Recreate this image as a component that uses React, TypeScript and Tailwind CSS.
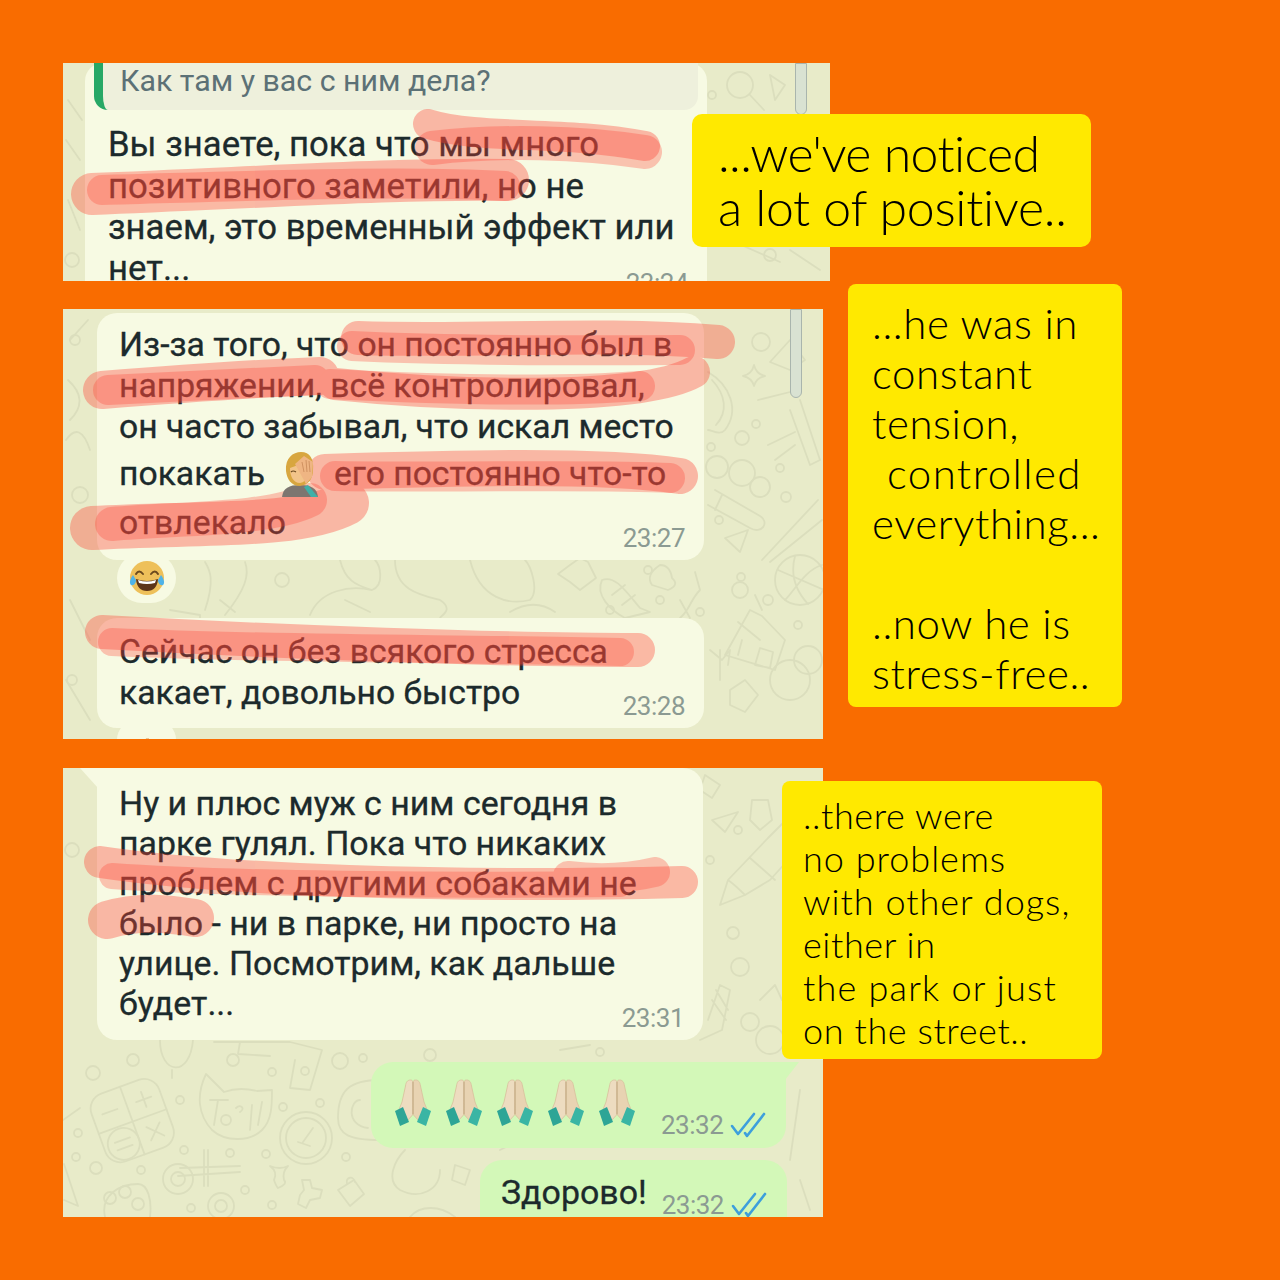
import React from "react";

function Doodles({ box, dots, children }: { box: string; dots: number[][]; children: React.ReactNode }) {
  return (
    <svg className="absolute inset-0 w-full h-full" viewBox={box} fill="none" stroke="#dbdebd" strokeWidth="1.8" strokeLinecap="round" strokeLinejoin="round">
      {dots.map((d, i) => (
        <circle key={i} cx={d[0]} cy={d[1]} r={d[2]} />
      ))}
      {children}
    </svg>
  );
}

function Strokes({ box, light, core }: { box: string; light: [string, number][]; core: [string, number][] }) {
  return (
    <svg className="absolute inset-0 w-full h-full z-10" viewBox={box} fill="none" stroke="#ff4436" strokeLinecap="round" strokeLinejoin="round">
      <g opacity="0.36">
        {light.map((s, i) => (
          <path key={i} d={s[0]} strokeWidth={s[1]} />
        ))}
      </g>
      <g opacity="0.3">
        {core.map((s, i) => (
          <path key={i} d={s[0]} strokeWidth={s[1]} />
        ))}
      </g>
    </svg>
  );
}

function Ticks() {
  return (
    <svg width="36" height="26" viewBox="0 0 36 26" fill="none" stroke="#3d9fdc" strokeWidth="2.6" strokeLinecap="round" strokeLinejoin="round">
      <path d="M2 14 L8 22 L24 2" />
      <path d="M15 21 L17 24 L34 2" />
    </svg>
  );
}

function Hands() {
  return (
    <svg width="36" height="48" viewBox="0 0 36 48">
      <path d="M15.5 1 C12.5 1 11 3 10.5 7 L7 23 L3 33 L12 42 L17.5 36 L17.7 3 C17.5 1.5 17 1 15.5 1Z" fill="#eddcc0" stroke="#d8bf9c" strokeWidth="0.8" />
      <path d="M20.5 1 C23.5 1 25 3 25.5 7 L29 23 L33 33 L24 42 L18.5 36 L18.3 3 C18.5 1.5 19 1 20.5 1Z" fill="#e8d3b2" stroke="#d8bf9c" strokeWidth="0.8" />
      <path d="M18 3 L18 35" stroke="#c6a986" strokeWidth="1" />
      <path d="M0 32 L8 28 L14 43 L5 47Z" fill="#2ea596" />
      <path d="M36 32 L28 28 L22 43 L31 47Z" fill="#3ab5a4" />
    </svg>
  );
}

function Joy() {
  return (
    <svg width="38" height="38" viewBox="0 0 38 38">
      <circle cx="19" cy="19" r="17" fill="#eec05a" />
      <path d="M8 15 Q11 10 15 15 M23 15 Q27 10 30 15" fill="none" stroke="#6b4a1e" strokeWidth="2" strokeLinecap="round" />
      <path d="M8 20 Q19 24 30 20 Q29 32 19 32 Q9 32 8 20Z" fill="#5d3518" />
      <path d="M10 21 Q19 24 28 21 L27 24 Q19 26 11 24Z" fill="#fff" />
      <path d="M5 16 C2 20 1 24 3 26 C6 27 8 24 8 21Z" fill="#4fb3e8" />
      <path d="M33 16 C36 20 37 24 35 26 C32 27 30 24 30 21Z" fill="#4fb3e8" />
    </svg>
  );
}

function Facepalm() {
  return (
    <svg width="38" height="46" viewBox="0 0 38 46" className="relative z-20">
      <path d="M1 46 C2 37 8 34 19 34 C30 34 36 37 37 46Z" fill="#7d7670" />
      <path d="M27 34 L37 46 L30 46 L23 36Z" fill="#3fb0a8" />
      <path d="M5 20 C4 7 12 1 20 1 C29 1 33 8 32 19 C32 27 28 34 19 35 C10 35 6 28 5 20Z" fill="#d8a63f" />
      <path d="M9 17 C14 15 22 12 27 12 C29 20 27 31 19 32 C12 32 9 25 9 17Z" fill="#f2c48a" />
      <path d="M14 13 L23 5 L32 11 L31 26 L25 33 L19 22Z" fill="#efb583" />
      <path d="M21 11 L23 21 M25 9 L26 21 M28 10 L29 21" stroke="#d09261" strokeWidth="1" />
      <path d="M10 21 Q12 19 15 21" stroke="#6b4a1e" strokeWidth="1.2" fill="none" />
    </svg>
  );
}

function Time({ children, className }: { children: React.ReactNode; className: string }) {
  return <span className={"font-['Roboto',sans-serif] text-[26px] leading-[30px] text-[#8b9a92] tracking-[-0.5px] whitespace-nowrap [-webkit-text-stroke:0px] " + className}>{children}</span>;
}

export default function App() {
  const chat = "font-['Roboto',sans-serif] text-[#1c2a2c] whitespace-nowrap [-webkit-text-stroke:0.3px_#1c2a2c]";
  const card = "font-['Lato',sans-serif] font-light text-black whitespace-nowrap";
  return (
    <div className="w-[1280px] h-[1280px] bg-[#f96c00] overflow-hidden pt-[63px] pl-[63px] flex flex-col">
      {/* Row 1 */}
      <div className="flex items-start">
        <div className="relative w-[767px] h-[218px] bg-[#e8ebc9] overflow-hidden shrink-0">
          <Doodles box="63 63 767 218" dots={[[815, 130, 5], [72, 260, 7], [712, 95, 4], [770, 255, 6]]}>
            <circle cx="740" cy="85" r="13" />
            <path d="M750 95 L764 110 M720 130 L760 118 L790 140 L750 165Z M712 190 L745 210 L780 190 M730 240 L780 262 M800 200 L825 180 M790 250 L820 270 M770 75 L785 85 L775 100Z" />
            <path d="M68 100 L82 120 M66 140 L80 160 M68 200 L80 230" />
          </Doodles>
          <div className="relative ml-[22px] w-[622px] h-[300px] bg-[#f7fae3] rounded-[18px] px-[9px]">
            <div className="h-[47px] bg-[#eef0dc] rounded-b-[14px] border-l-[9px] border-[#27a866] pl-[17px] text-[#5c7176] font-['Roboto',sans-serif] text-[30.3px] leading-[36px] whitespace-nowrap">
              Как там у вас с ним дела?
            </div>
            <div className={"mt-[14px] pl-[14px] text-[34.7px] " + chat}>
              <div className="h-[41.5px] leading-[41.5px]">Вы знаете, пока что мы много</div>
              <div className="h-[41.5px] leading-[41.5px]">позитивного заметили, но не</div>
              <div className="h-[41px] leading-[41px]">знаем, это временный эффект или</div>
              <div className="flex justify-between h-[41px] leading-[41px] pr-[10px]">
                <span>нет...</span>
                <Time className="mt-[20px]">23:24</Time>
              </div>
            </div>
          </div>
          <div className="absolute top-0 left-[732px] w-[12px] h-[52px] border border-[#a9b5ad] bg-[#d9e2d2] rounded-b-full" />
          <Strokes
            box="63 63 767 218"
            light={[
              ["M428 124 C480 140 560 130 645 146", 30],
              ["M92 194 C250 188 400 178 508 180", 42],
            ]}
            core={[
              ["M432 148 C500 140 580 142 645 152", 34],
              ["M102 190 C250 186 400 180 505 186", 30],
            ]}
          />
        </div>
        <div className={"relative z-20 -ml-[138px] mt-[51px] w-[399px] h-[133px] shrink-0 bg-[#ffe900] rounded-[10px] pt-[12px] pl-[26px] text-[50px] leading-[54px] " + card}>
          <div className="tracking-[-0.6px]">...we've noticed</div>
          <div className="tracking-[-0.3px]">a lot of positive..</div>
        </div>
      </div>

      {/* Row 2 */}
      <div className="flex items-start mt-[28px]">
        <div className="relative w-[760px] h-[430px] bg-[#e8ebc9] overflow-hidden shrink-0">
          <Doodles box="63 309 760 430" dots={[[761, 342, 9], [717, 467, 11], [742, 473, 13], [760, 487, 10], [742, 438, 7], [756, 424, 4], [711, 447, 4], [780, 468, 4], [786, 497, 5], [719, 520, 4], [741, 577, 4], [798, 625, 4], [80, 495, 8], [282, 580, 7], [648, 570, 4], [660, 600, 4], [740, 590, 8], [768, 600, 5], [610, 610, 4], [700, 612, 4], [75, 340, 5], [72, 680, 5]]}>
            <path d="M754 365 Q756 374 765 376 Q756 378 754 386 Q752 378 743 376 Q752 374 754 365Z" />
            <path d="M708 372 C730 385 740 410 725 430 C720 436 712 430 708 430 M712 380 C726 395 728 412 716 425" />
            <path d="M770 362 L790 340 L805 360 L790 370Z M790 410 L810 465 L820 460 L800 400 M758 400 L790 392 M768 445 L795 432 M775 460 L795 445" />
            <path d="M715 490 L760 516 C770 522 762 535 750 528 L708 505 M722 495 L715 510" />
            <path d="M725 538 L748 530 L740 552Z" />
            <path d="M762 560 L818 500 M770 562 L822 520" />
            <circle cx="800" cy="580" r="25" />
            <path d="M778 570 L824 590 M795 556 C790 575 795 590 808 604 M822 565 C805 570 795 590 785 600" />
            <path d="M725 655 L750 610 L762 616 L785 640 L775 670 L725 655 M738 622 L760 640 M742 640 L738 655 M760 648 L755 665 L770 668 L773 652Z M755 595 L762 610" />
            <circle cx="790" cy="680" r="20" />
            <circle cx="808" cy="660" r="14" />
            <path d="M710 650 L722 660 L730 650 L728 665 M720 650 L720 680" />
            <path d="M730 690 L745 680 L758 695 L745 712 L730 705Z" />
            <path d="M68 380 Q90 400 70 420 M70 340 L88 320 M66 440 Q80 420 90 450 M70 600 L90 640 M66 680 L90 720" />
            <path d="M205 610 C215 580 210 570 205 562 M225 615 C245 590 250 575 245 562 M235 612 L220 600" />
            <path d="M310 615 C320 590 350 585 372 590 C385 585 380 565 375 560 M340 560 C345 580 355 585 372 590 M345 600 L370 612" />
            <path d="M395 560 C395 590 420 595 440 600 C455 610 440 616 440 618 M470 560 C480 600 510 605 530 600 C540 590 530 565 525 560 M510 612 C530 600 545 605 555 612" />
            <path d="M602 580 C615 575 625 590 640 608 L650 612 L625 618 C610 610 595 595 602 580Z M612 595 L625 585 M622 605 L635 595" />
            <path d="M170 610 L200 615 L200 618 M570 565 L580 558 L588 562 L596 578 L580 590 L570 582 L558 574Z" />
            <path d="M660 565 Q670 565 672 578 Q680 585 668 590 L652 585 Q645 575 660 565Z M680 600 L690 618 M695 572 L700 590 C690 600 690 610 680 618" />
          </Doodles>
          <div className="ml-[34px] mt-[4px] w-[607px] h-[247px] bg-[#f7fae3] rounded-[20px] pt-[11px] pl-[22px] pr-[19px] relative">
            <div className={"text-[33.7px] " + chat}>
              <div className="h-[41px] leading-[41px]">Из-за того, что он постоянно был в</div>
              <div className="h-[41px] leading-[41px]">напряжении, всё контролировал,</div>
              <div className="h-[41px] leading-[41px]">он часто забывал, что искал место</div>
              <div className="flex items-center h-[56px] -mt-px">
                <span>покакать</span>
                <span className="ml-[16px] mr-[15px]"><Facepalm /></span>
                <span>его постоянно что-то</span>
              </div>
              <div className="flex justify-between h-[41px] leading-[41px]">
                <span>отвлекало</span>
                <Time className="mt-[21px]">23:27</Time>
              </div>
            </div>
          </div>
          <div className="relative z-[5] ml-[54px] -mt-[7px] w-[59px] h-[50px] rounded-full bg-[#f7fae3] flex items-center justify-center">
            <Joy />
          </div>
          <div className="ml-[34px] mt-[15px] w-[607px] h-[110px] bg-[#f7fae3] rounded-[20px] pt-[13px] pl-[22px] pr-[19px] relative">
            <div className={"text-[33.7px] " + chat}>
              <div className="h-[41px] leading-[41px]">Сейчас он без всякого стресса</div>
              <div className="flex justify-between h-[41px] leading-[41px]">
                <span>какает, довольно быстро</span>
                <Time className="mt-[19px]">23:28</Time>
              </div>
            </div>
          </div>
          <div className="ml-[54px] -mt-[8px] w-[59px] h-[40px] rounded-full bg-[#f7fae3] relative">
            <svg className="absolute left-[24px] top-[18px]" width="12" height="14" viewBox="0 0 12 14"><path d="M5 0 L8 0 L8 14 L2 14Z" fill="#e8c79a" /></svg>
          </div>
          <div className="absolute top-0 left-[727px] w-[12px] h-[89px] border border-[#a9b5ad] bg-[#d9e2d2] rounded-b-full" />
          <Strokes
            box="63 309 760 430"
            light={[
              ["M358 338 C480 342 600 332 718 342", 34],
              ["M102 390 C200 382 270 378 320 376", 38],
              ["M335 384 C450 396 640 402 694 372", 32],
              ["M325 472 C460 468 600 464 680 476", 36],
              ["M347 503 C300 528 200 522 92 528", 44],
              ["M102 632 C280 642 500 650 638 650", 34],
            ]}
            core={[
              ["M352 346 C480 352 600 350 680 350", 30],
              ["M108 390 C200 386 270 382 315 380", 30],
              ["M330 384 C450 390 560 392 640 386", 30],
              ["M335 476 C460 478 600 474 670 478", 30],
              ["M310 500 C270 520 180 518 112 524", 34],
              ["M112 642 C300 650 450 648 620 652", 28],
            ]}
          />
        </div>
        <div className={"relative z-20 ml-[25px] -mt-[25px] w-[274px] h-[423px] shrink-0 bg-[#ffe900] rounded-[8px] pt-[14px] pl-[24px] text-[42px] leading-[50px] " + card}>
          <div className="tracking-[0.6px]">...he was in</div>
          <div className="tracking-[0.6px]">constant</div>
          <div className="tracking-[0.6px]">tension,</div>
          <div className="tracking-[1.4px] pl-[15px]">controlled</div>
          <div className="tracking-[0.6px]">everything...</div>
          <div className="h-[50px]" />
          <div className="tracking-[0.6px]">..now he is</div>
          <div className="tracking-[0.6px]">stress-free..</div>
        </div>
      </div>

      {/* Row 3 */}
      <div className="flex items-start mt-[29px]">
        <div className="relative w-[760px] h-[449px] bg-[#e8ebc9] overflow-hidden shrink-0">
          <Doodles box="63 768 760 449" dots={[[133, 1060, 6], [93, 1073, 7], [233, 1060, 6], [272, 1072, 4], [305, 1071, 4], [340, 1061, 8], [363, 1058, 4], [180, 1100, 4], [283, 1107, 4], [320, 1103, 4], [78, 1133, 4], [76, 1157, 4], [96, 1168, 6], [141, 1170, 4], [184, 1150, 4], [230, 1153, 4], [266, 1154, 4], [346, 1157, 4], [245, 1190, 4], [272, 1205, 4], [191, 1208, 4], [733, 933, 6], [740, 967, 9], [750, 1022, 9], [710, 860, 4], [738, 830, 4], [72, 850, 7], [770, 1040, 14], [600, 1052, 4], [430, 1055, 6]]}>
            <g transform="rotate(-20 131 1120)">
              <rect x="96" y="1085" width="72" height="72" rx="16" />
              <path d="M132 1085 L132 1157 M96 1122 L168 1122 M106 1105 L122 1105 M142 1105 L158 1105 M150 1097 L150 1113 M143 1132 L157 1146 M157 1132 L143 1146" />
              <circle cx="116" cy="1140" r="16" />
              <path d="M108 1136 L124 1136 M108 1144 L124 1144" />
            </g>
            <path d="M206 1074 L224 1092 C235 1088 245 1088 257 1091 L272 1090 C272 1105 272 1120 262 1130 C250 1142 225 1142 212 1130 C198 1115 196 1095 206 1074Z M210 1100 L228 1100 M218 1100 L214 1125 M236 1108 C240 1104 246 1108 240 1112 M252 1105 L250 1130 M262 1102 L258 1125" />
            <circle cx="226" cy="1120" r="5" />
            <circle cx="306" cy="1138" r="26" />
            <circle cx="306" cy="1138" r="20" />
            <path d="M303 1142 L313 1128 M298 1142 L310 1146" />
            <path d="M204 1150 L204 1186 M208 1150 L208 1186 M180 1168 L240 1166 M178 1176 L240 1172" />
            <circle cx="178" cy="1179" r="15" />
            <circle cx="178" cy="1179" r="7" />
            <circle cx="221" cy="1206" r="13" />
            <circle cx="221" cy="1206" r="6" />
            <path d="M274 1180 Q278 1172 270 1166 Q280 1170 288 1166 Q282 1172 284 1180 Q288 1184 278 1188 Q276 1186 274 1180Z" />
            <path d="M300 1195 L304 1190 L302 1180 L310 1180 L312 1188 L322 1190 L320 1198 L310 1200 L306 1208 L298 1204 L300 1195Z" />
            <path d="M338 1190 L354 1180 L364 1194 L350 1206 L338 1190Z M347 1184 C345 1176 354 1176 355 1182" />
            <path d="M105 1217 C100 1195 120 1184 138 1184 C148 1184 152 1200 150 1217" />
            <circle cx="110" cy="1198" r="6" />
            <circle cx="125" cy="1192" r="6" />
            <circle cx="138" cy="1204" r="6" />
            <path d="M63 1120 L80 1108 M64 1200 L78 1206 L64 1164" />
            <path d="M160 1040 C160 1075 190 1078 193 1040 M172 1070 L172 1078 M214 1042 L290 1042 L322 1050 L310 1090 L290 1088 L295 1060 M240 1042 L238 1054 L270 1056" />
            <path d="M380 1080 C350 1080 338 1090 338 1118 C338 1135 350 1140 380 1140 M360 1100 C350 1100 345 1125 368 1128" />
            <path d="M768 838 L788 818 L808 838 L770 880 L745 895 L720 905 L728 880 L768 838 M750 858 L775 880 M728 880 C735 885 740 890 745 895" />
            <path d="M705 775 L720 785 L712 798 L700 790Z M712 820 L738 812 L725 832Z M752 800 L768 800 L772 820 L760 830 L750 820Z" />
            <path d="M708 1020 L720 985 L730 990 L722 1030 M712 1000 L726 1020 M716 990 L728 1010 M700 1040 L722 1030 M760 1000 L775 985 L782 1000" />
            <path d="M405 1150 C395 1160 385 1180 400 1190 C420 1200 440 1190 440 1170 M410 1217 C420 1205 440 1205 455 1217 M500 1150 L520 1140 M560 1050 L590 1045 M800 1090 L790 1160 M800 1180 L810 1210" />
            <path d="M455 1165 L470 1170 L465 1185 L452 1180Z" />
          </Doodles>
          <div className="relative ml-[34px] w-[606px] h-[272px] bg-[#f7fae3] rounded-b-[20px] rounded-tr-[20px] pt-[16px] pl-[22px] pr-[19px]">
            <div className="absolute top-0 -left-[17px] w-0 h-0 border-t-[20px] border-t-[#f7fae3] border-l-[18px] border-l-transparent" />
            <div className={"text-[33.9px] " + chat}>
              <div className="h-[40px] leading-[40px]">Ну и плюс муж с ним сегодня в</div>
              <div className="h-[40px] leading-[40px]">парке гулял. Пока что никаких</div>
              <div className="h-[40px] leading-[40px]">проблем с другими собаками не</div>
              <div className="h-[40px] leading-[40px]">было - ни в парке, ни просто на</div>
              <div className="h-[40px] leading-[40px]">улице. Посмотрим, как дальше</div>
              <div className="flex justify-between h-[40px] leading-[40px]">
                <span>будет...</span>
                <Time className="mt-[19px]">23:31</Time>
              </div>
            </div>
          </div>
          <div className="relative ml-[308px] mt-[22px] w-[415px] h-[86px] bg-[#d3f8b8] rounded-l-[22px] rounded-br-[22px] flex items-start pl-[24px] pt-[17px]">
            <div className="absolute top-0 -right-[13px] w-0 h-0 border-t-[18px] border-t-[#d3f8b8] border-r-[14px] border-r-transparent" />
            <div className="flex gap-[15px]">
              <Hands /><Hands /><Hands /><Hands /><Hands />
            </div>
            <div className="flex items-center ml-[26px] mt-[31px] gap-[7px]">
              <Time className="">23:32</Time>
              <Ticks />
            </div>
          </div>
          <div className="ml-[417px] mt-[12px] w-[307px] h-[80px] bg-[#d3f8b8] rounded-[22px] flex items-start pl-[21px] pt-[8px]">
            <span className={"text-[33.9px] " + chat}>Здорово!</span>
            <div className="flex items-center ml-[15px] mt-[22px] gap-[7px]">
              <Time className="">23:32</Time>
              <Ticks />
            </div>
          </div>
          <Strokes
            box="63 768 760 449"
            light={[
              ["M100 862 C220 880 450 888 682 882", 32],
              ["M107 920 C140 910 170 914 195 918", 38],
            ]}
            core={[
              ["M112 876 C220 884 450 886 620 884", 26],
              ["M568 876 C600 880 630 878 655 872", 30],
            ]}
          />
        </div>
        <div className={"relative z-20 -ml-[41px] mt-[13px] w-[320px] h-[278px] shrink-0 bg-[#ffe900] rounded-[8px] pt-[13px] pl-[21px] text-[36px] leading-[43px] " + card}>
          <div className="tracking-[0.6px]">..there were</div>
          <div className="tracking-[1px]">no problems</div>
          <div className="tracking-[1px]">with other dogs,</div>
          <div className="tracking-[0.6px]">either in</div>
          <div className="tracking-[1.2px]">the park or just</div>
          <div className="tracking-[0.6px]">on the street..</div>
        </div>
      </div>
    </div>
  );
}
